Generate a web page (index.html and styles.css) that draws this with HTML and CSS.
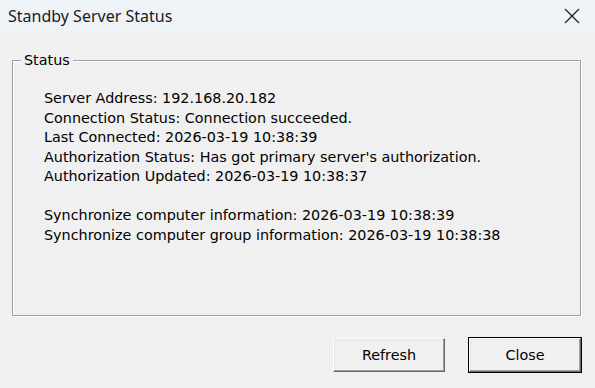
FILE: index.html
```html
<!DOCTYPE html>
<html lang="en">
<head>
    <meta charset="UTF-8">
    <title>Standby Server Status</title>
    <link rel="stylesheet" href="styles.css">
</head>
<body>
    <div class="window">
        <div class="titlebar">
            <span class="title">Standby Server Status</span>
            <span class="close-x">
                <svg width="16" height="16" viewBox="0 0 16 16">
                    <path d="M1 1 L15 15 M15 1 L1 15" stroke="#1a1a1a" stroke-width="1.2" fill="none"/>
                </svg>
            </span>
        </div>

        <div class="dialog">
            <div class="groupbox">
                <span class="legend">Status</span>
                <div class="info">
                    <div>Server Address: 192.168.20.182</div>
                    <div>Connection Status: Connection succeeded.</div>
                    <div>Last Connected: 2026-03-19 10:38:39</div>
                    <div>Authorization Status: Has got primary server's authorization.</div>
                    <div>Authorization Updated: 2026-03-19 10:38:37</div>
                    <div class="blank"></div>
                    <div>Synchronize computer information: 2026-03-19 10:38:39</div>
                    <div>Synchronize computer group information: 2026-03-19 10:38:38</div>
                </div>
            </div>

            <div class="buttons">
                <button class="btn">Refresh</button>
                <button class="btn btn-default">Close</button>
            </div>
        </div>
    </div>
</body>
</html>
```

FILE: styles.css
```css
html, body {
    margin: 0;
    padding: 0;
}
* {
    box-sizing: border-box;
}
body {
    width: 595px;
    height: 388px;
    background: #f0f0f0;
    font-family: 'DejaVu Sans', Tahoma, sans-serif;
    font-size: 14.35px;
    color: #000;
    overflow: hidden;
}
.window {
    height: 388px;
    display: flex;
    flex-direction: column;
}
.titlebar {
    height: 33px;
    background: #eef3f8;
    display: flex;
    align-items: center;
    justify-content: space-between;
    padding: 0 15px 2px 8px;
    flex-shrink: 0;
}
.title {
    font-family: 'Noto Sans', sans-serif;
    font-size: 16px;
    color: #1a1a1a;
}
.close-x {
    display: flex;
    width: 16px;
    height: 16px;
}
.dialog {
    padding: 27px 14px 0 12px;
}
.groupbox {
    position: relative;
    height: 256px;
    border: 1px solid #a0a0a0;
    box-shadow: 1px 1px 0 #fff, inset 1px 1px 0 #fff;
    padding: 28px 0 0 31px;
}
.legend {
    position: absolute;
    top: -10px;
    left: 8px;
    padding: 0 3px;
    background: #f0f0f0;
    line-height: 18px;
}
.info {
    line-height: 19.5px;
}
.blank {
    height: 19.5px;
}
.buttons {
    display: flex;
    justify-content: flex-end;
    gap: 24px;
    margin-top: 22px;
}
.btn {
    width: 112px;
    height: 34px;
    font-family: 'DejaVu Sans', Tahoma, sans-serif;
    font-size: 14.35px;
    color: #000;
    background: #f0f0f0;
    border: 1px solid;
    border-color: #fff #696969 #696969 #fff;
    box-shadow: inset -1px -1px 0 #a0a0a0, inset 1px 1px 0 #e3e3e3;
    padding: 0;
}
.btn-default {
    outline: 1px solid #000;
    outline-offset: 0;
}
```
